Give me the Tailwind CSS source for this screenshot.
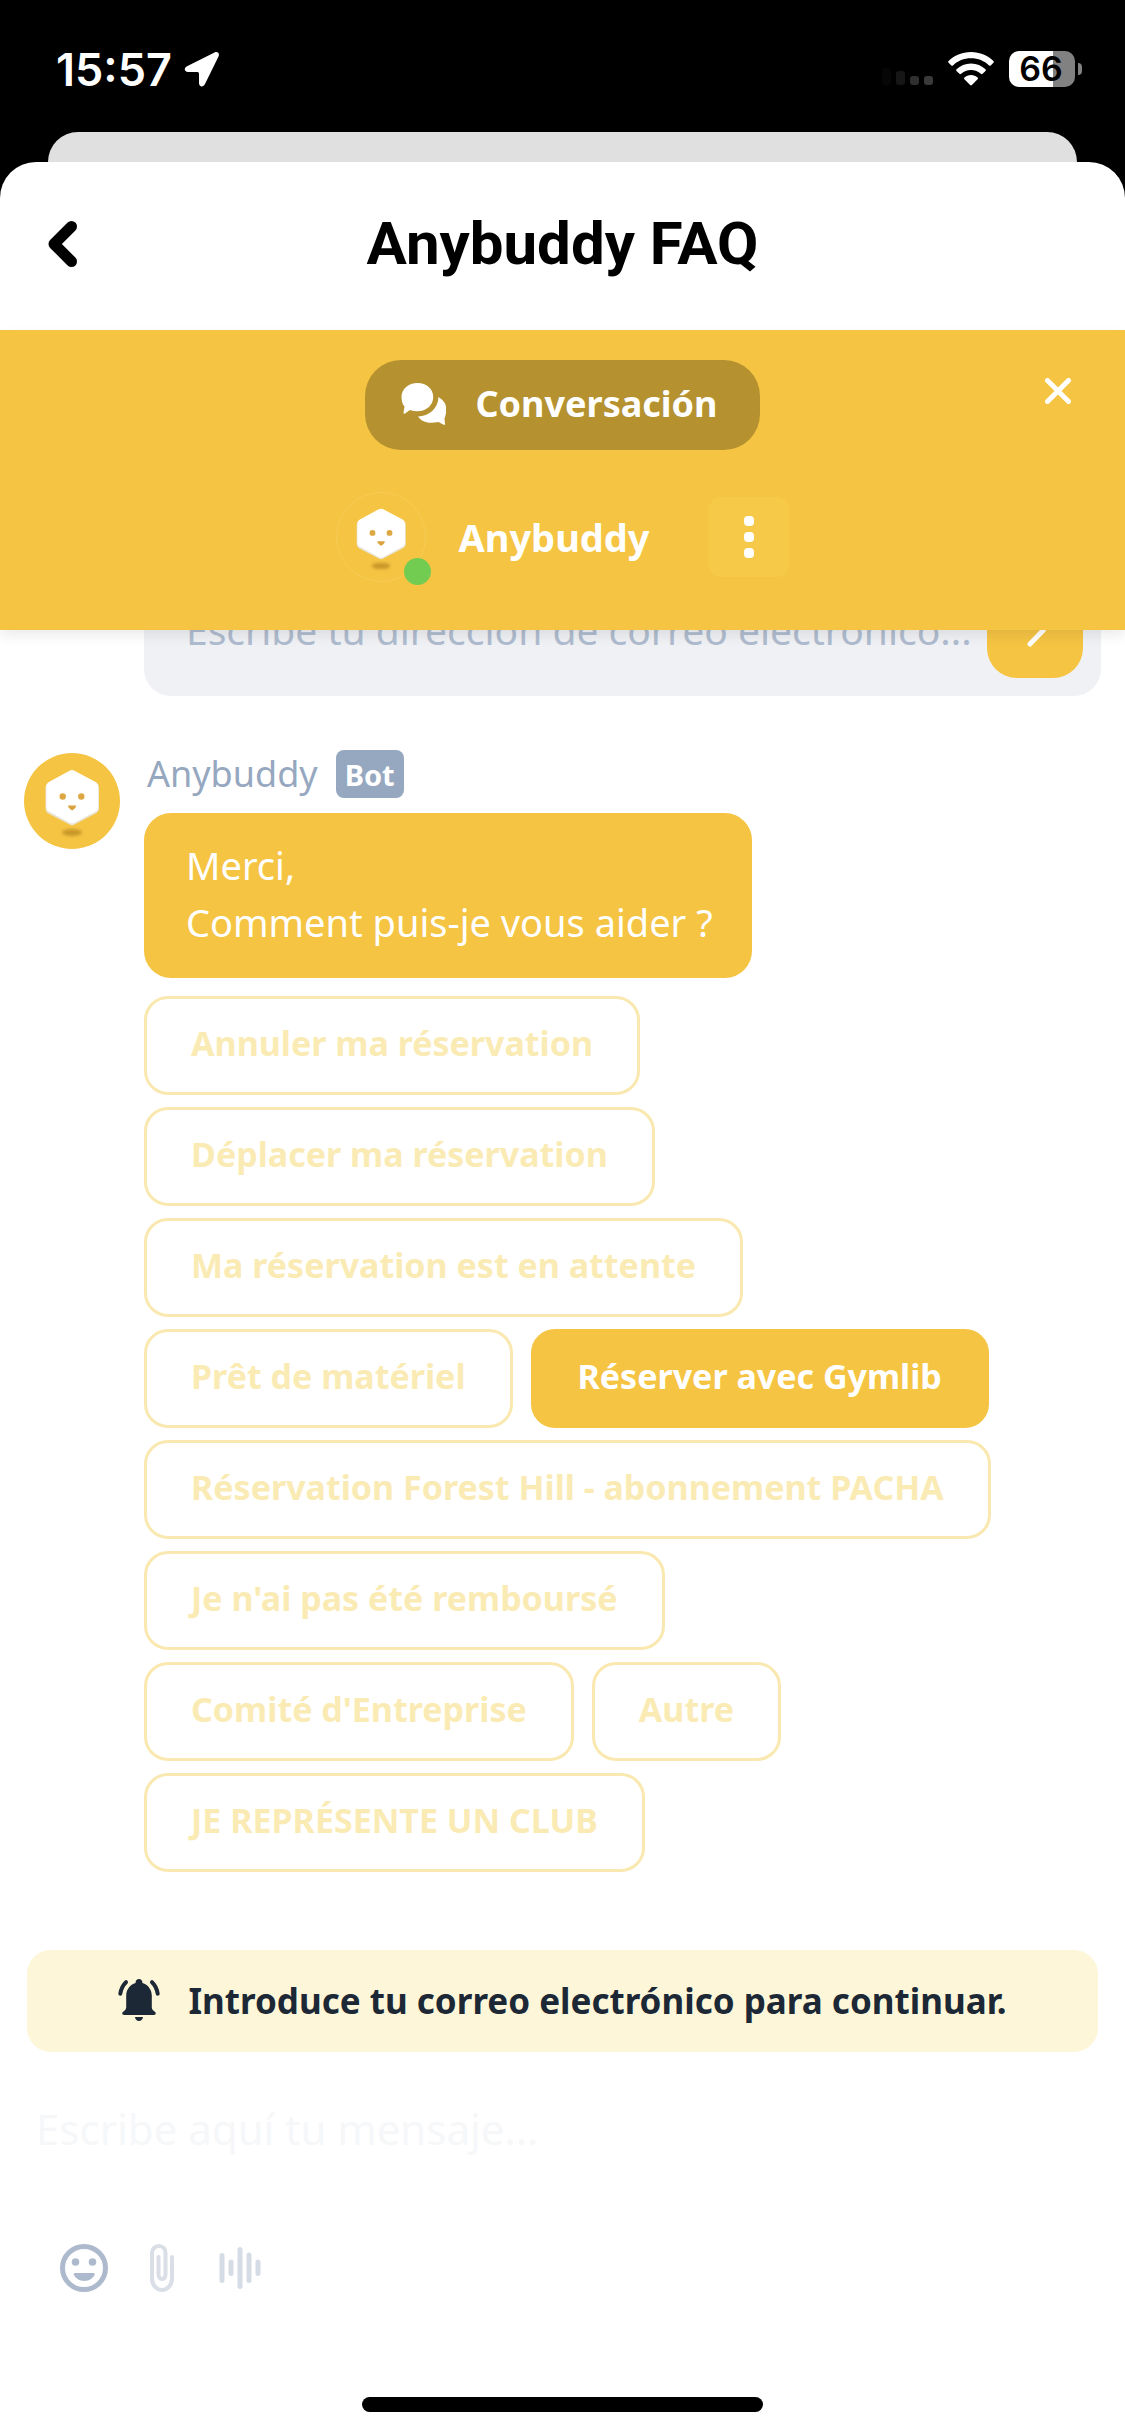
<!DOCTYPE html>
<html lang="es">
<head>
<meta charset="utf-8">
<meta name="viewport" content="width=device-width, initial-scale=1">
<title>Anybuddy FAQ</title>
<script src="https://cdn.jsdelivr.net/npm/@tailwindcss/browser@4"></script>
</head>
<body class="bg-black font-['Noto_Sans',sans-serif]">
<svg class="hidden" aria-hidden="true">
  <defs>
    <filter id="soft" x="-50%" y="-100%" width="200%" height="300%"><feGaussianBlur stdDeviation="1.8"/></filter>
    <symbol id="robot" viewBox="0 0 96 96">
      <ellipse cx="48" cy="79.500" rx="10" ry="3.500" fill="#c9982a" filter="url(#soft)"/>
      <path d="M45.500 18.500q2.500-1.400 5 0l22 11.500q2.500 1.400 2.500 4.500v21q0 3-2.500 4.500l-22 11.500q-2.500 1.400-5 0l-22-11.500Q21.500 58.500 21.500 55.500v-21q0-3 2.500-4.500z" fill="#e9e4d6"/>
      <path d="M45.500 17.800q2.500-1.400 5 0l21.500 11.400q2.200 1.400 2.200 4.300v20.500q0 3-2.200 4.300l-21.500 11.400q-2.500 1.400-5 0L24.500 58.300q-2.200-1.400-2.200-4.300V33.500q0-3 2.200-4.300z" fill="#fff"/>
      <circle cx="38.700" cy="43.500" r="3.200" fill="#dda843"/>
      <circle cx="57.300" cy="43.500" r="3.200" fill="#dda843"/>
      <path d="M44 52.500h8.200q0 2.500-4.100 5-4.100-2.500-4.100-5z" fill="#d9a440"/>
    </symbol>
  </defs>
</svg>
<div class="flex min-h-screen flex-col">
  <div class="flex h-[132px] items-center justify-between pr-[43px] pl-14 pb-11 pt-[50px]">
    <div class="flex items-center gap-3 text-white">
      <time class="font-['Inter'] text-[45px] leading-none font-semibold">15:57</time>
      <svg class="size-9" viewBox="0 0 36 36" fill="currentColor"><path d="M30.500 1.500 3 15.300C-.5 17 .3 21 4 21h9.500q1.500 0 1.500 1.500V32c0 4 4.300 4.700 6 1L34.500 5.500c1.500-3-1-5.500-4-4z"/></svg>
    </div>
    <div class="flex items-center">
      <svg class="h-9 w-[52px]" viewBox="0 0 52 36"><rect y="17" width="9" height="17" rx="3" fill="#060606"/><rect x="14" y="20" width="9" height="14" rx="3" fill="#161616"/><rect x="28" y="25" width="9" height="9" rx="3" fill="#303030"/><rect x="42" y="25" width="9" height="9" rx="3" fill="#3a3a3a"/></svg>
      <svg class="ml-[14px] h-9 w-[46px]" viewBox="0 0 46 36" fill="#fff"><path d="M23 1C14 1 6 4.500.6 9.900q-.9.900 0 1.800l2.700 2.700q.8.800 1.700 0C9.700 9.900 16 7.300 23 7.300s13.300 2.600 18 7.100q.9.800 1.700 0l2.700-2.700q.9-.9 0-1.800C40 4.500 32 1 23 1z"/><path d="M23 12.400c-5.700 0-10.800 2.200-14.500 5.800q-.9.900 0 1.800l2.900 2.800q.8.800 1.700 0c2.600-2.400 6-3.900 9.900-3.900s7.300 1.500 9.900 3.900q.9.800 1.700 0l2.900-2.800q.9-.9 0-1.800c-3.700-3.600-8.800-5.800-14.500-5.800z"/><path d="M23 24c-2.600 0-4.900 1-6.600 2.500q-.9.900 0 1.800l5.700 5.700q.9.900 1.800 0l5.700-5.700q.9-.9 0-1.800C27.900 25 25.600 24 23 24z"/></svg>
      <div class="ml-[15px] flex h-9 w-[66px] items-center justify-center rounded-[10px] bg-linear-to-r from-white from-66% to-[#818181] to-66% pr-0.5 font-['Inter'] text-[34px] leading-none font-semibold text-black">66</div>
      <div class="ml-[3px] h-3 w-1 rounded-r-full bg-[#818181]"></div>
    </div>
  </div>
  <div class="mx-12 h-[30px] rounded-t-[30px] bg-[#e0e0e0]"></div>
  <main class="flex flex-1 flex-col">
    <header class="grid h-[168px] grid-cols-[1fr_auto_1fr] items-center rounded-t-[36px] bg-white px-12 pb-1">
      <a href="#" aria-label="Retour" class="justify-self-start"><svg class="h-[46px] w-[30px]" viewBox="0 0 30 46" fill="none" stroke="#000" stroke-width="11" stroke-linecap="round" stroke-linejoin="round"><path d="M23.500 5.500 6 23l17.500 17.500"/></svg></a>
      <h1 class="font-['Roboto'] text-[60px] leading-none font-bold">Anybuddy FAQ</h1>
    </header>
    <section class="relative z-10 flex flex-col items-center gap-[42px] bg-[#f5c443] pt-[30px] pb-12 text-white shadow-[0_6px_12px_rgba(0,0,0,0.08)]">
      <button class="flex h-[90px] items-center gap-[29px] rounded-[36px] bg-[#b5922f] pr-[42px] pl-9 pb-0.5 text-[36px] leading-none font-bold">
        <svg class="h-[42px] w-[45px]" viewBox="0 0 45 42" fill="currentColor"><path d="M16.500 0C7.500 0 .5 6 .5 14c0 3.800 1 7.500 3 9.500l-1 6q0 1.700 1.500 1l5-3.500c2.300.8 4.800 1.200 7.500 1.200 9 0 15.700-6 15.700-14.200S25.500 0 16.500 0z"/><path d="M37.500 14c4.500 3 7.500 6.500 7.500 10.500v4.500c0 3-1 5-1.500 6.500l.5 5.500q-.3 1.500-1.800.6L37.500 39c-2.500.6-5 .8-7.500.8-6 0-10.500-2.500-13-6.300C28 33 37 26 37.500 14z"/></svg>
        Conversación
      </button>
      <div class="flex items-center">
        <div class="relative size-[90px] rounded-full border border-[#f7cc55]">
          <svg class="size-full"><use href="#robot"/></svg>
          <span class="absolute -right-1.5 -bottom-1 size-[27px] rounded-full bg-[#73cc52]"></span>
        </div>
        <p class="ml-8 text-[38px] leading-none font-bold">Anybuddy</p>
        <button aria-label="Menu" class="ml-[59px] flex size-20 flex-col items-center justify-center gap-[6px] rounded-xl bg-[#f6c948]">
          <span class="size-[10px] rounded-[4px] bg-white"></span><span class="size-[10px] rounded-[4px] bg-white"></span><span class="size-[10px] rounded-[4px] bg-white"></span>
        </button>
      </div>
      <button aria-label="Cerrar" class="absolute top-12 right-[54px]"><svg class="size-[26px]" viewBox="0 0 26 26" fill="none" stroke="#fff" stroke-width="5" stroke-linecap="round"><path d="m2.500 2.500 21 21m0-21-21 21"/></svg></button>
    </section>
    <section class="flex-1 bg-white px-6 pb-[78px]">
      <form class="-mt-[66px] ml-[120px] flex h-[132px] items-center rounded-[27px] bg-[#f0f1f4] pr-[18px] pl-[42px]">
        <input type="email" aria-label="Correo electrónico" placeholder="Escribe tu dirección de correo electrónico..." class="min-w-0 flex-1 text-[39px] leading-[56px] text-[#98a8c1] outline-none placeholder:text-[#afbccf]">
        <button type="button" aria-label="Enviar" class="flex size-24 items-center justify-center rounded-[30px] bg-[#f5c443] pl-1"><svg class="h-9 w-5" viewBox="0 0 20 36" fill="none" stroke="#fff" stroke-width="5" stroke-linecap="round" stroke-linejoin="round"><path d="m3 4 13.500 14L3 32"/></svg></button>
      </form>
      <article class="mt-[54px] flex gap-6">
        <div class="mt-[3px] size-24 shrink-0 rounded-full bg-[#f5c443]"><svg class="size-full"><use href="#robot"/></svg></div>
        <div class="min-w-0 flex-1">
          <div class="flex h-12 items-center gap-[18px] pl-[3px]">
            <span class="text-[36px] leading-none text-[#96a7c0]">Anybuddy</span>
            <span class="flex h-12 items-center rounded-lg bg-[#96a7c0] px-[9px] text-[29px] leading-none font-bold text-white">Bot</span>
          </div>
          <p class="mt-[15px] w-fit rounded-[27px] bg-[#f5c443] pt-6 pr-[39px] pb-[27px] pl-[42px] text-[38px] leading-[57px] text-white">Merci,<br>Comment puis-je vous aider ?</p>
          <div class="mt-[18px] flex flex-wrap gap-x-[18px] gap-y-3 text-[34px] font-bold text-[#faebb4]">
            <button class="h-[99px] rounded-3xl border-3 border-[#f9e8b0] px-11 pb-1">Annuler ma réservation</button>
            <button class="h-[99px] rounded-3xl border-3 border-[#f9e8b0] px-11 pb-1">Déplacer ma réservation</button>
            <button class="h-[99px] rounded-3xl border-3 border-[#f9e8b0] px-11 pb-1">Ma réservation est en attente</button>
            <button class="h-[99px] rounded-3xl border-3 border-[#f9e8b0] px-11 pb-1">Prêt de matériel</button>
            <button class="h-[99px] rounded-3xl border-3 border-[#f5c443] bg-[#f5c443] px-11 pb-1 text-white">Réserver avec Gymlib</button>
            <button class="h-[99px] rounded-3xl border-3 border-[#f9e8b0] px-11 pb-1">Réservation Forest Hill - abonnement PACHA</button>
            <button class="h-[99px] rounded-3xl border-3 border-[#f9e8b0] px-11 pb-1">Je n'ai pas été remboursé</button>
            <button class="h-[99px] rounded-3xl border-3 border-[#f9e8b0] px-11 pb-1">Comité d'Entreprise</button>
            <button class="h-[99px] rounded-3xl border-3 border-[#f9e8b0] px-11 pb-1">Autre</button>
            <button class="h-[99px] rounded-3xl border-3 border-[#f9e8b0] px-11 pb-1">JE REPRÉSENTE UN CLUB</button>
          </div>
        </div>
      </article>
    </section>
    <footer class="bg-white px-[27px] pb-6">
      <div class="flex h-[102px] items-center justify-center gap-7 rounded-3xl bg-[#fdf6d8] pb-0.5 text-[35px] leading-none font-bold text-[#1c2835]">
        <svg class="h-[42px] w-[42px]" viewBox="0 0 42 42" fill="currentColor"><path d="M21 0c2 0 3.400 1.400 3.400 3.300v.6C30 5.500 33.800 10.500 33.800 16.500V28c0 2 .6 3 3 4.800 1.800 1.300.8 3.200-.8 3.200H6c-1.600 0-2.600-1.900-.8-3.200 2.400-1.800 3-2.800 3-4.800V16.500C8.200 10.500 12 5.500 17.600 3.900v-.6C17.600 1.400 19 0 21 0zM17 38h8c0 2.400-1.800 3.900-4 3.900S17 40.400 17 38z"/><path d="M8 3.200C5 6 3 10 2.300 14.800M34 3.200C37 6 39 10 39.700 14.800" fill="none" stroke="currentColor" stroke-width="4" stroke-linecap="round"/></svg>
        <p>Introduce tu correo electrónico para continuar.</p>
      </div>
      <input type="text" aria-label="Mensaje" placeholder="Escribe aquí tu mensaje..." class="mt-11 block h-16 w-full pl-[9px] text-[42px] outline-none placeholder:text-[#f6f7f9]">
      <div class="mt-[84px] flex h-12 items-center pl-[33px]">
        <button aria-label="Emoji"><svg class="size-12" viewBox="0 0 48 48" fill="#adb9cc"><circle cx="24" cy="24" r="21.500" fill="none" stroke="#adb9cc" stroke-width="5"/><circle cx="15.500" cy="18" r="3.800"/><circle cx="32.500" cy="18" r="3.800"/><path d="M15 29h18.500q2 0 1.200 1.800C33 34.500 29 37 24.300 37S15.600 34.500 13.800 30.800Q13 29 15 29z"/></svg></button>
        <button aria-label="Adjuntar" class="ml-[42px]"><svg class="h-12 w-6" viewBox="0 0 24 48" fill="none" stroke="#d9dee7" stroke-width="4" stroke-linecap="round"><path d="M22 13v21.500c0 6.500-4.500 11.500-10 11.500S2 41 2 34.500V9c0-4 3-7 6.800-7s6.700 3 6.700 7v21.500c0 2.500-1.500 4.500-3.500 4.500s-3.500-2-3.500-4.500V13"/></svg></button>
        <button aria-label="Audio" class="ml-[45px]"><svg class="h-12 w-[42px]" viewBox="0 0 42 48" fill="none" stroke="#d6dce6" stroke-width="5" stroke-linecap="round"><path d="M3 11.500v25M12 18v11.500M21 5.500v37M30 11v25.500M39 18v11.500"/></svg></button>
      </div>
      <div class="mx-auto mt-[105px] h-[15px] w-[401px] rounded-full bg-black"></div>
    </footer>
  </main>
</div>
</body>
</html>
